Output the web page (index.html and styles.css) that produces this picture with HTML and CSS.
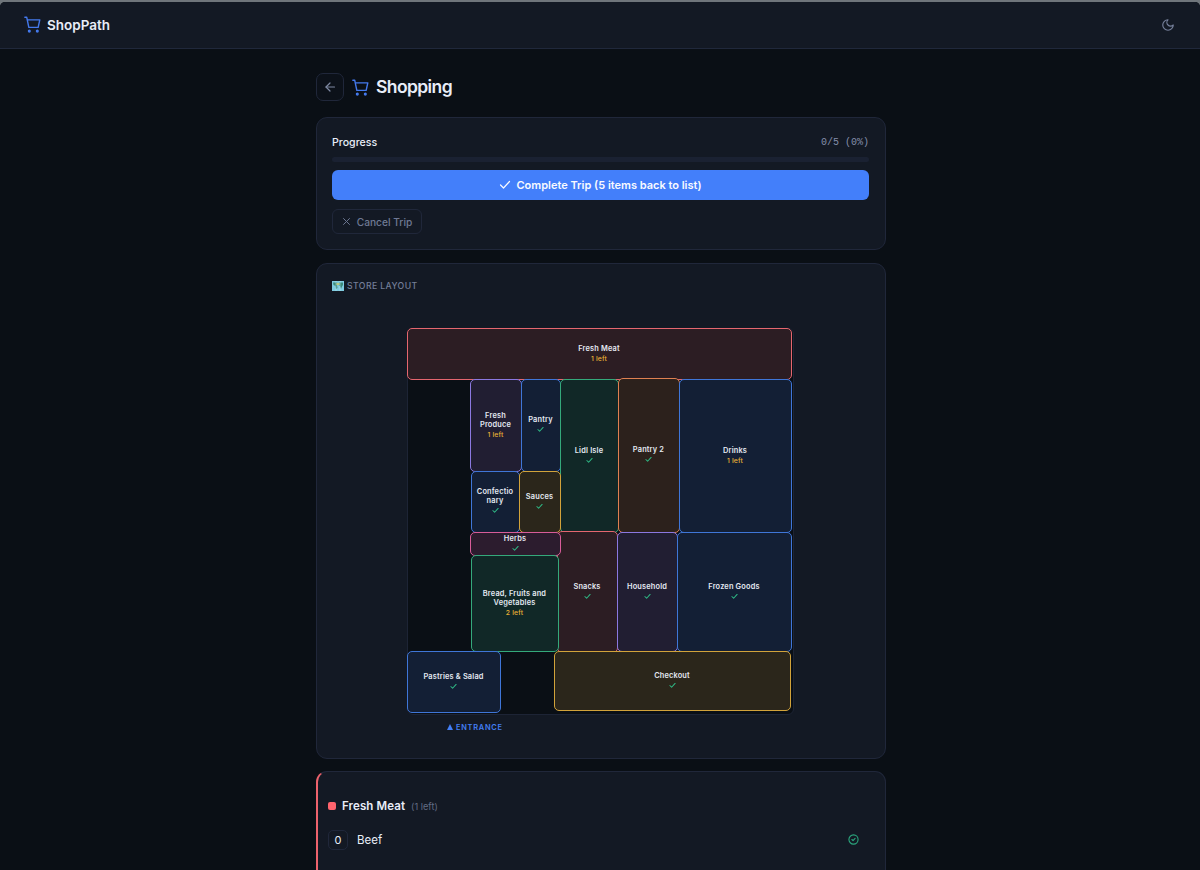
FILE: index.html
```html
<!DOCTYPE html>
<html lang="en">
<head>
<meta charset="utf-8">
<title>ShopPath</title>
<link rel="stylesheet" href="styles.css">
</head>
<body>
<svg class="defs" width="0" height="0">
  <symbol id="cart" viewBox="0 0 24 24"><path d="M1.200 1.700h2.600l3 14.300h13.200l2.300-10.500H4.700"/><circle class="wheel" cx="7.500" cy="21.300" r="1.200"/><circle class="wheel" cx="18.800" cy="21.300" r="1.200"/></symbol>
  <symbol id="check" viewBox="0 0 24 24"><path d="M21 5 9 18l-6-6"/></symbol>
</svg>
<div class="window">
  <header class="topbar">
    <div class="brand"><svg class="icon cart"><use href="#cart"/></svg><span class="brand-name">ShopPath</span></div>
    <svg class="icon moon" viewBox="0 0 24 24"><path d="M12 3a6 6 0 0 0 9 9 9 9 0 1 1-9-9Z"/></svg>
  </header>
  <main class="page">
    <div class="heading">
      <button class="back" aria-label="Back"><svg class="icon" viewBox="0 0 24 24"><path d="m12 20-8-8 8-8"/><path d="M21 12H4"/></svg></button>
      <svg class="icon cart"><use href="#cart"/></svg>
      <h1>Shopping</h1>
    </div>
    <section class="card progress">
      <div class="progress-head"><span class="label">Progress</span><span class="count">0/5 (0%)</span></div>
      <div class="track"></div>
      <button class="complete"><svg class="icon"><use href="#check"/></svg><span>Complete Trip (5 items back to list)</span></button>
      <button class="cancel"><svg class="icon" viewBox="0 0 24 24"><path d="M20 4 4 20M4 4l16 16"/></svg><span>Cancel Trip</span></button>
    </section>
    <section class="card layout">
      <div class="layout-title">
        <svg class="map-icon" viewBox="0 0 12 10"><rect width="12" height="10" fill="#7fcbe0"/><path d="M1 1.500h4l1 1.500-1 1 .5 3L4 8 3.500 5 1.500 4ZM7 1.500h4V4l-1 1.500L9 8 8 5 6.500 4Z" fill="#3c8a7a"/><path d="M4.500 2h3v2h-3Z" fill="#b9c982"/><path d="M4 0v10M8 0v10" stroke="#d2f1f5" stroke-width=".4"/></svg>
        <span>STORE LAYOUT</span>
      </div>
      <div class="map">
        <div class="zone red z-meat"><b>Fresh Meat</b><i>1 left</i></div>
        <div class="zone violet z-produce"><b>Fresh<br>Produce</b><i>1 left</i></div>
        <div class="zone blue z-pantry"><b>Pantry</b><svg class="icon"><use href="#check"/></svg></div>
        <div class="zone green z-lidl"><b>Lidl Isle</b><svg class="icon"><use href="#check"/></svg></div>
        <div class="zone orange z-pantry2"><b>Pantry 2</b><svg class="icon"><use href="#check"/></svg></div>
        <div class="zone blue z-drinks"><b>Drinks</b><i>1 left</i></div>
        <div class="zone blue z-conf"><b>Confectio<br>nary</b><svg class="icon"><use href="#check"/></svg></div>
        <div class="zone yellow z-sauces"><b>Sauces</b><svg class="icon"><use href="#check"/></svg></div>
        <div class="zone red z-snacks"><b>Snacks</b><svg class="icon"><use href="#check"/></svg></div>
        <div class="zone pink z-herbs"><b>Herbs</b><svg class="icon"><use href="#check"/></svg></div>
        <div class="zone green z-bread"><b>Bread, Fruits and<br>Vegetables</b><i>2 left</i></div>
        <div class="zone violet z-house"><b>Household</b><svg class="icon"><use href="#check"/></svg></div>
        <div class="zone blue z-frozen"><b>Frozen Goods</b><svg class="icon"><use href="#check"/></svg></div>
        <div class="zone blue z-pastries"><b>Pastries &amp; Salad</b><svg class="icon"><use href="#check"/></svg></div>
        <div class="zone yellow z-checkout"><b>Checkout</b><svg class="icon"><use href="#check"/></svg></div>
      </div>
      <div class="entrance"><span class="marker"></span><span>ENTRANCE</span></div>
    </section>
    <section class="card items">
      <div class="group"><span class="dot"></span><h2>Fresh Meat</h2><span class="left">(1 left)</span></div>
      <div class="item"><span class="qty">0</span><span class="name">Beef</span><svg class="icon done" viewBox="0 0 24 24"><circle cx="12" cy="12" r="10"/><path d="m8.500 12 2.500 2.500 4.500-5"/></svg></div>
    </section>
  </main>
</div>
</body>
</html>
```
FILE: styles.css
```css
* { box-sizing: border-box; }
body { margin: 0; height: 870px; overflow: hidden; background: #6f757b; color: #e8edf8; font-family: Inter, "Open Sans", sans-serif; }
button { font: inherit; margin: 0; padding: 0; cursor: pointer; }
.defs { display: block; height: 0; }
.icon { display: block; flex: none; fill: none; stroke: currentColor; stroke-width: 2; stroke-linecap: round; stroke-linejoin: round; }
.window { margin-top: 2px; height: 868px; overflow: hidden; border-radius: 5px 5px 0 0; background: #0a0f15; }
.topbar { height: 47px; display: flex; align-items: center; justify-content: space-between; padding: 0 25px 1px 24px; background: #131924; border-bottom: 1px solid #20283b; }
.brand { display: flex; align-items: center; gap: 6px; }
.cart { width: 17px; height: 17px; color: #4479ec; }
.wheel { fill: currentColor; }
.brand-name { font-size: 13.5px; font-weight: 600; line-height: 18px; }
.moon { width: 14px; height: 14px; color: #76809b; }
.page { width: 570px; margin-left: 316px; padding-top: 24px; }
.heading { height: 28px; display: flex; align-items: center; gap: 8px; margin-bottom: 16px; }
.back { width: 28px; height: 28px; display: grid; place-items: center; border: 1px solid #20273a; border-radius: 7px; background: #0c1119; color: #7f89a3; }
.back .icon { width: 12px; height: 12px; stroke-width: 2.4; }
h1 { margin: 0 0 0 -1px; font-size: 17.5px; font-weight: 600; line-height: 24px; letter-spacing: -.6px; }
.card { border: 1px solid #20273a; border-radius: 11px; background: #131924; }
.progress { height: 133px; padding: 16px 16px 15px 15px; }
.progress-head { display: flex; align-items: center; justify-content: space-between; height: 16px; }
.label { font-size: 10.6px; font-weight: 500; }
.count { font: 10px "Liberation Mono", monospace; color: #848eaa; }
.track { height: 5px; margin-top: 7px; border-radius: 3px; background: #1a2132; }
.complete { width: 100%; height: 30px; margin-top: 8px; display: flex; align-items: center; justify-content: center; gap: 5px; border: 0; border-radius: 6px; background: #437ffa; color: #f8faff; font-size: 11px; font-weight: 600; }
.complete .icon { width: 12px; height: 12px; stroke-width: 2.4; }
.cancel { width: 90px; height: 25px; margin-top: 9px; display: flex; align-items: center; justify-content: center; gap: 6px; border: 1px solid #20273a; border-radius: 6px; background: transparent; color: #6f7994; font-size: 10.2px; font-weight: 500; }
.cancel .icon { width: 9px; height: 9px; stroke-width: 2.6; }
.layout { height: 496px; margin-top: 13px; padding: 14px 15px; }
.layout-title { display: flex; align-items: center; gap: 3px; height: 16px; font-size: 8.7px; font-weight: 500; letter-spacing: .4px; color: #747e98; }
.map-icon { width: 12px; height: 10px; }
.map { position: relative; width: 387px; height: 387px; margin: 34px 0 0 75px; border: 1px solid #1d2435; border-radius: 6px; background: #0a0f15; }
.zone { position: absolute; display: flex; flex-direction: column; align-items: center; justify-content: center; padding: 0 1px 2px 0; border: 1px solid; border-radius: 5px; text-align: center; font-size: 7.4px; line-height: 9px; letter-spacing: .17px; }
.zone b { font-weight: 600; color: #e3e8f1; }
.zone i { font-style: normal; font-weight: 500; font-size: 6.8px; line-height: 9px; margin-top: 1px; color: #e9b235; }
.zone .icon { width: 7px; height: 7px; margin: 2px 0 1px; stroke-width: 3.5; color: #2fb985; }
.red { border-color: #e5666f; background: #2c1d23; }
.violet { border-color: #8b78e0; background: #211e32; }
.blue { border-color: #3f76d8; background: #131f35; }
.green { border-color: #34a97b; background: #112827; }
.orange { border-color: #df8051; background: #2c211c; }
.yellow { border-color: #d2a33a; background: #2b261b; }
.pink { border-color: #d85c99; background: #2c1c2e; }
.z-meat { left: -1px; top: -1px; width: 385px; height: 52px; }
.z-produce { left: 62px; top: 50px; width: 52px; height: 93px; }
.z-pantry { left: 113px; top: 50px; width: 40px; height: 93px; }
.z-lidl { left: 152px; top: 50px; width: 59px; height: 154px; }
.z-pantry2 { left: 210px; top: 49px; width: 62px; height: 155px; }
.z-drinks { left: 271px; top: 50px; width: 113px; height: 154px; }
.z-conf { left: 63px; top: 142px; width: 49px; height: 62px; }
.z-sauces { left: 111px; top: 142px; width: 42px; height: 62px; }
.z-herbs { left: 62px; top: 203px; width: 91px; height: 24px; }
.z-snacks { left: 149px; top: 202px; width: 61px; height: 122px; }
.z-bread { left: 63px; top: 226px; width: 88px; height: 97px; }
.z-house { left: 209px; top: 203px; width: 61px; height: 120px; }
.z-frozen { left: 269px; top: 203px; width: 115px; height: 120px; }
.z-pastries { left: -1px; top: 322px; width: 94px; height: 62px; }
.z-checkout { left: 146px; top: 322px; width: 237px; height: 60px; }
.entrance { display: flex; align-items: center; gap: 3px; height: 12px; margin: 6px 0 0 115px; font-size: 7.4px; font-weight: 600; letter-spacing: .75px; color: #437ff5; }
.marker { width: 6px; height: 6px; background: currentColor; clip-path: polygon(50% 0, 100% 100%, 0 100%); }
.items { height: 150px; margin-top: 12px; padding: 25px 26px 0 10px; border-left: 2px solid #ed626c; }
.group { display: flex; align-items: center; height: 18px; gap: 6px; }
.dot { width: 8px; height: 8px; border-radius: 2px; background: #ff646d; }
h2 { margin: 0; font-size: 11.5px; font-weight: 600; letter-spacing: .1px; }
.left { font-size: 9.2px; color: #626c84; }
.item { display: flex; align-items: center; height: 20px; margin-top: 15px; }
.qty { width: 20px; height: 20px; display: grid; place-items: center; border: 1px solid #20273a; border-radius: 5px; font-size: 11px; }
.name { margin-left: 9px; font-size: 11.5px; }
.done { width: 11px; height: 11px; margin: 0 0 2px auto; color: #2aa67d; stroke-width: 2.4; }
```
